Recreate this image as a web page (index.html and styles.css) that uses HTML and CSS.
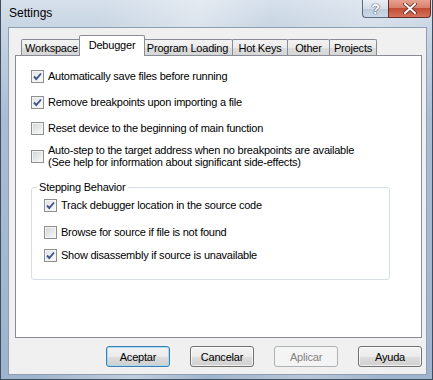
FILE: index.html
```html
<!DOCTYPE html>
<html>
<head>
<meta charset="utf-8">
<link rel="stylesheet" href="styles.css">
</head>
<body>
<div class="window">
  <div class="titlebar">
    <span class="title">Settings</span>
    <div class="caption">
      <div class="cap help">?</div>
      <div class="cap close">
        <svg width="14" height="11" viewBox="0 0 14 11"><path d="M2 1 L12 10 M12 1 L2 10" stroke="#5a2a22" stroke-width="3.6" stroke-linecap="round"/><path d="M2 1 L12 10 M12 1 L2 10" stroke="#fff" stroke-width="2" stroke-linecap="round"/></svg>
      </div>
    </div>
  </div>
  <div class="client">
    <div class="tabs">
      <div class="tab t-workspace">Workspace</div>
      <div class="tab t-debugger active">Debugger</div>
      <div class="tab t-loading">Program Loading</div>
      <div class="tab t-hotkeys">Hot Keys</div>
      <div class="tab t-other">Other</div>
      <div class="tab t-projects">Projects</div>
    </div>
    <div class="panel">
      <label class="check r1"><span class="box on"><svg width="11" height="11" viewBox="0 0 11 11"><path d="M2 5.5 L4.3 8 L9 2.5" fill="none" stroke="#3f5488" stroke-width="1.9"/></svg></span><span>Automatically save files before running</span></label>
      <label class="check r2"><span class="box on"><svg width="11" height="11" viewBox="0 0 11 11"><path d="M2 5.5 L4.3 8 L9 2.5" fill="none" stroke="#3f5488" stroke-width="1.9"/></svg></span><span>Remove breakpoints upon importing a file</span></label>
      <label class="check r3"><span class="box"></span><span>Reset device to the beginning of main function</span></label>
      <label class="check r4"><span class="box"></span><span>Auto-step to the target address when no breakpoints are available<br>(See help for information about significant side-effects)</span></label>
      <fieldset class="group">
        <legend>Stepping Behavior</legend>
        <label class="check g1"><span class="box on"><svg width="11" height="11" viewBox="0 0 11 11"><path d="M2 5.5 L4.3 8 L9 2.5" fill="none" stroke="#3f5488" stroke-width="1.9"/></svg></span><span>Track debugger location in the source code</span></label>
        <label class="check g2"><span class="box"></span><span>Browse for source if file is not found</span></label>
        <label class="check g3"><span class="box on"><svg width="11" height="11" viewBox="0 0 11 11"><path d="M2 5.5 L4.3 8 L9 2.5" fill="none" stroke="#3f5488" stroke-width="1.9"/></svg></span><span>Show disassembly if source is unavailable</span></label>
      </fieldset>
    </div>
    <div class="buttons">
      <button class="btn default">Aceptar</button>
      <button class="btn">Cancelar</button>
      <button class="btn disabled">Aplicar</button>
      <button class="btn">Ayuda</button>
    </div>
  </div>
</div>
</body>
</html>
```
FILE: styles.css
```css
* { box-sizing: border-box; }
html, body { margin: 0; padding: 0; }
body {
  width: 433px;
  height: 380px;
  overflow: hidden;
  font-family: "Liberation Sans", Arial, sans-serif;
  font-size: 11px;
  color: #000;
  background: #6d8098;
}
.window {
  width: 433px;
  height: 380px;
  display: flex;
  flex-direction: column;
  border: 1px solid #3e4d60;
  border-top: none;
  padding: 0 5px 5px 7px;
  background:
    linear-gradient(100deg, rgba(255,255,255,0) 20%, rgba(255,255,255,0.35) 40%, rgba(255,255,255,0) 55%, rgba(255,255,255,0.25) 75%, rgba(255,255,255,0) 90%),
    linear-gradient(180deg, #d6e0eb 0, #c8d5e3 27px, #a9bcd2 120px, #9fb4cc 100%);
}
.titlebar {
  height: 27px;
  display: flex;
  justify-content: space-between;
  align-items: flex-start;
  flex: none;
}
.title {
  font-size: 12px;
  padding-top: 6px;
  margin-left: 1px;
  color: #000;
}
.caption {
  display: flex;
  margin-right: -4px;
}
.cap {
  height: 18px;
  border: 1px solid #5b6a7c;
  border-top: none;
  display: flex;
  align-items: center;
  justify-content: center;
}
.help {
  width: 26px;
  border-radius: 0 0 0 4px;
  border-right: none;
  background: linear-gradient(180deg, #e9eef4 0, #d4dde8 50%, #bccadb 51%, #cdd9e6 100%);
  color: #fff;
  font-size: 14px;
  font-weight: bold;
  text-shadow: 0 0 1px #4b5868, 0 0 1px #4b5868, 0 0 1px #4b5868;
}
.close {
  width: 43px;
  border-radius: 0 0 4px 0;
  border-color: #6a2c24;
  background: linear-gradient(180deg, #e8a190 0, #d8806c 45%, #c24c34 50%, #d4735c 100%);
}
.client {
  flex: 1;
  background: #f0f0f0;
  border: 1px solid #8d9db3;
  padding: 7px 4px 7px 6px;
  display: flex;
  flex-direction: column;
}
.tabs {
  display: flex;
  align-items: flex-start;
  height: 21px;
  margin-left: 6px;
  margin-bottom: -1px;
  position: relative;
  z-index: 1;
  flex: none;
}
.tab {
  height: 16px;
  margin-top: 4px;
  margin-left: -1px;
  border: 1px solid #898c95;
  border-bottom: none;
  border-radius: 2px 2px 0 0;
  background: linear-gradient(180deg, #f3f3f3 0, #ebebeb 50%, #dddddd 51%, #d6d6d6 100%);
  text-align: center;
  line-height: 16px;
  letter-spacing: -0.2px;
  flex: none;
}
.t-workspace { width: 61px; margin-left: 0; }
.t-debugger { width: 62px; }
.t-loading { width: 91px; }
.t-hotkeys { width: 56px; }
.t-other { width: 43px; }
.t-projects { width: 48px; }
.tab.active {
  width: 66px;
  height: 21px;
  margin-top: 0;
  margin-left: -3px;
  margin-right: -2px;
  background: #fff;
  line-height: 19px;
  position: relative;
  z-index: 2;
}
.panel {
  height: 283px;
  flex: none;
  background: #fff;
  border: 1px solid #898c95;
  padding: 14px 0 0 15px;
  display: flex;
  flex-direction: column;
  align-items: flex-start;
}
.check {
  display: flex;
  align-items: center;
  gap: 4px;
  min-height: 13px;
  line-height: 13px;
  letter-spacing: -0.23px;
  white-space: nowrap;
}
.r2, .r3 { margin-top: 13px; }
.r4 { margin-top: 9px; line-height: 12px; }
.box {
  width: 13px;
  height: 13px;
  flex: none;
  border: 1px solid #8e8f8f;
  background: linear-gradient(135deg, #d2d4d6 0, #e6e7e8 50%, #fbfbfb 100%);
  box-shadow: inset 0 0 0 1px #f4f4f4;
  display: flex;
  align-items: center;
  justify-content: center;
}
.box.on {
  background: linear-gradient(135deg, #dde0e6 0, #eef0f3 50%, #fbfbfb 100%);
}
.group {
  margin: 13px 0 0 0;
  width: 359px;
  border: 1px solid #d5dfe5;
  border-radius: 3px;
  padding: 0 0 17px 12px;
  display: flex;
  flex-direction: column;
}
.group legend {
  padding: 0 2px;
  margin-left: -7px;
  line-height: 13px;
  letter-spacing: -0.2px;
}
.g1 { margin-top: 5px; }
.g2 { margin-top: 14px; }
.g3 { margin-top: 10px; }
.buttons {
  display: flex;
  justify-content: flex-end;
  gap: 20px;
  margin-top: 8px;
  flex: none;
}
.btn {
  width: 64px;
  height: 21px;
  padding: 0;
  border: 1px solid #707070;
  border-radius: 3px;
  background: linear-gradient(180deg, #f2f2f2 0, #ebebeb 50%, #dddddd 51%, #cfcfcf 100%);
  box-shadow: inset 0 0 0 1px rgba(255,255,255,0.7);
  font-family: "Liberation Sans", Arial, sans-serif;
  font-size: 11px;
  letter-spacing: -0.2px;
  color: #000;
}
.btn.default {
  border-color: #3c7fb1;
  box-shadow: inset 0 0 0 1px #a6dbf6;
}
.btn.disabled {
  border-color: #adb2b5;
  background: #f4f4f4;
  box-shadow: none;
  color: #838383;
}
```
